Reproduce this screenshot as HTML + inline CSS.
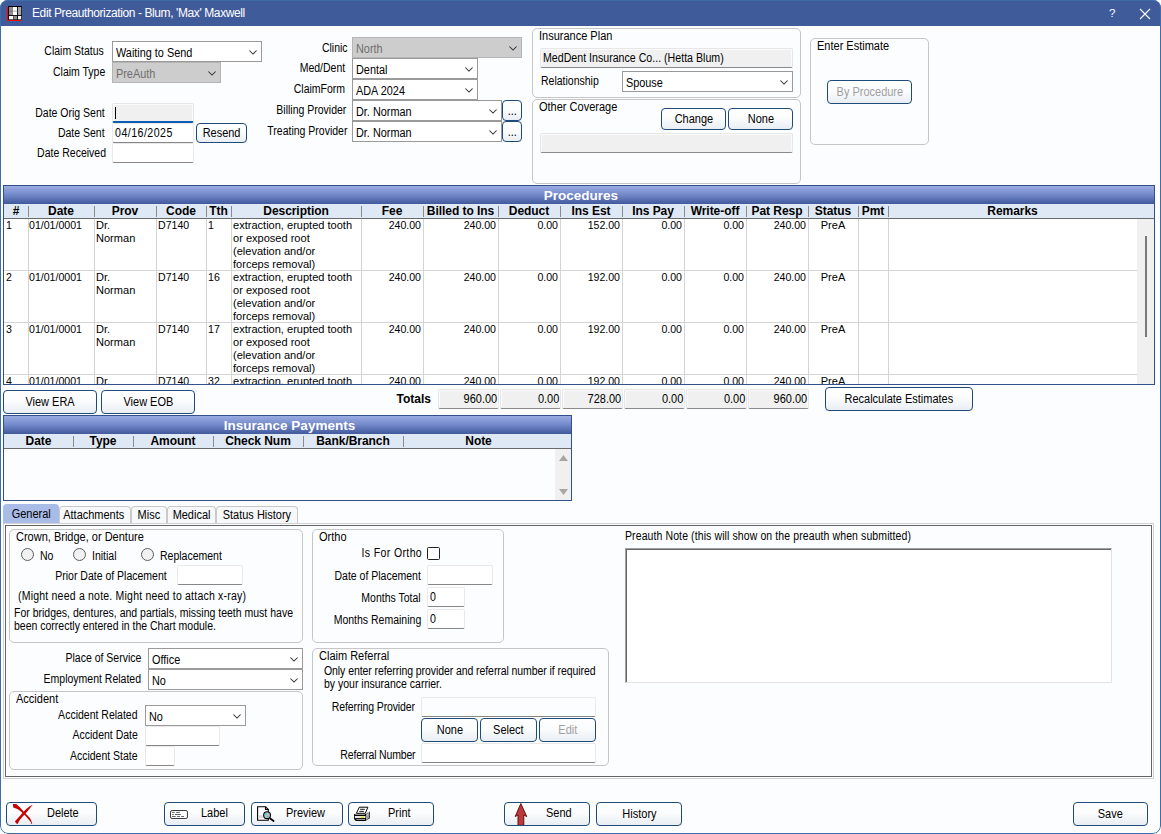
<!DOCTYPE html>
<html lang="en"><head><meta charset="utf-8"><title>Edit Preauthorization</title>
<style>
html,body{margin:0;padding:0;background:#fff;}
body{width:1161px;height:834px;overflow:hidden;position:relative;font-family:"Liberation Sans",sans-serif;font-size:12.5px;color:#000;}
#win{position:absolute;left:0;top:0;width:1161px;height:834px;border-radius:8px;background:#fcfdfe;overflow:hidden;}
#wb{position:absolute;left:0;top:0;width:1159px;height:832px;border:1px solid #3d6ea8;border-radius:8px;pointer-events:none;}
#tbar{position:absolute;left:0;top:0;width:1161px;height:25px;background:#405b9a;border-top:1px solid #4a7db8;}
#ttl{position:absolute;left:32px;top:6px;font-size:12px;color:#fff;white-space:nowrap;letter-spacing:-0.4px;}
.a{position:absolute;white-space:nowrap;}
.t{display:inline-block;transform:scaleX(.84);transform-origin:0 50%;white-space:nowrap;}
.r>.t{transform-origin:100% 50%;}
.bt>.t,.tab>.t{transform:scaleX(.878);transform-origin:50% 50%;}
.gt>.t{transform:scaleX(.88);}
.cb>.t{transform:scaleX(.869);}
.tb>.t{transform:scaleX(.85);}
.l{position:absolute;white-space:nowrap;line-height:15px;height:15px;}
.r{text-align:right;}
.cb{position:absolute;box-sizing:border-box;border:1px solid #9a9a9a;background:#fff;line-height:23px;padding-left:3px;white-space:nowrap;}
.cb.d{background:#cdcdcd;color:#6d6d6d;border-color:#b4b4b4;}
.cb svg{position:absolute;right:4px;top:8px;}
.tb{position:absolute;box-sizing:border-box;border:1px solid #e9e9e9;border-bottom:1px solid #868686;border-radius:2px;background:#fff;line-height:18px;padding-left:2px;white-space:nowrap;}
.tb.ro{background:#f0f0f0;border-color:#e6e6e6;border-bottom-color:#8a8a8a;box-shadow:inset 1px 1px 0 #fbfbfb,inset -1px 0 0 #fbfbfb;}
.bt{position:absolute;box-sizing:border-box;border:1px solid #1f4b7a;border-radius:4px;background:linear-gradient(#ffffff 0%,#fbfcfd 45%,#e9eef3 100%);text-align:center;white-space:nowrap;}
.bt.d{color:#a0a0a0;}
.gb{position:absolute;box-sizing:border-box;border:1px solid #c6c6c6;border-radius:5px;}
.gt{position:absolute;white-space:nowrap;line-height:15px;}
.grid{position:absolute;box-sizing:border-box;border:1px solid #34508a;background:#fff;overflow:hidden;}
.gtitle{position:absolute;left:0;top:0;right:0;height:18px;background:linear-gradient(#9aace1 0%,#7389ca 48%,#41599b 100%);color:#fff;font-weight:bold;font-size:13.5px;text-align:center;line-height:19px;padding-left:4px;}
.ghead{position:absolute;left:0;right:0;background:#dfe8f5;border-bottom:1px solid #6a6a6a;box-sizing:border-box;}
.hc{position:absolute;top:0;height:14px;line-height:14px;font-weight:bold;font-size:12px;text-align:center;white-space:nowrap;letter-spacing:-0.05px;}
.hs{position:absolute;top:2px;width:1px;height:11px;background:#8c8c8c;}
.vl{position:absolute;width:1px;background:#d4d4d4;}
.hl{position:absolute;height:1px;background:#d4d4d4;}
.c{position:absolute;line-height:13px;white-space:nowrap;font-size:11.5px;transform:scaleX(.96);transform-origin:0 0;}
.c.r{transform:scaleX(.92);transform-origin:100% 0;}
.c.n{transform:scaleX(.92);}
.c.m{transform-origin:50% 0;}
.tab{position:absolute;box-sizing:border-box;border:1px solid #c9c9c9;border-bottom:none;border-radius:4px 4px 0 0;background:#f7f8f9;text-align:center;line-height:17px;white-space:nowrap;}
.tab.s{background:#a9bce8;border-color:#a9bce8;}
.rad{position:absolute;box-sizing:border-box;width:13px;height:13px;border:1px solid #5e5e5e;border-radius:50%;background:#f1f1f1;}
</style></head><body>
<div id="win">
<div id="tbar"></div>
<svg class="a" style="left:0;top:0" width="30" height="26" viewBox="0 0 30 26"><rect x="7" y="7" width="1.5" height="14" fill="#f00"/><rect x="7" y="19.6" width="14.2" height="1.4" fill="#f00"/><rect x="8.2" y="6" width="13.7" height="13.7" fill="#000"/><rect x="9" y="7" width="3.9" height="8.1" fill="#8e8e8e"/><rect x="12.9" y="7" width="4.2" height="8.1" fill="#fff"/><rect x="12.9" y="10.5" width="4.2" height="1.3" fill="#c6c6c6"/><rect x="9" y="10.5" width="3.9" height="1.3" fill="#7a7a7a"/><rect x="18" y="7" width="3.2" height="8.1" fill="#a6a6a6"/><rect x="9" y="16" width="4" height="3.3" fill="#fff"/><rect x="13.4" y="16" width="3.7" height="3.3" fill="#8e8e8e"/><rect x="18" y="16" width="3.2" height="3.3" fill="#fff"/></svg>
<div id="ttl">Edit Preauthorization - Blum, 'Max' Maxwell</div>
<div class="a" style="left:1109px;top:7px;font-size:11.5px;color:#fff">?</div>
<svg class="a" style="left:1139px;top:8px" width="12" height="12" viewBox="0 0 12 12"><path d="M1 1L11 11M11 1L1 11" stroke="#fff" stroke-width="1.1" fill="none"/></svg>
<div class="l r" style="left:-96px;width:200px;top:44px;"><span class="t">Claim Status</span></div>
<div class="cb" style="left:112px;top:41px;width:150px;height:21px"><span class="t">Waiting to Send</span><svg width="8" height="5" viewBox="0 0 8 5"><path d="M0.4 0.5L4 4.1L7.6 0.5" stroke="#333" stroke-width="1.05" fill="none"/></svg></div>
<div class="l r" style="left:-95px;width:200px;top:65px;"><span class="t">Claim Type</span></div>
<div class="cb d" style="left:112px;top:62px;width:109px;height:21px"><span class="t">PreAuth</span><svg width="8" height="5" viewBox="0 0 8 5"><path d="M0.4 0.5L4 4.1L7.6 0.5" stroke="#333" stroke-width="1.05" fill="none"/></svg></div>
<div class="l r" style="left:-95px;width:200px;top:106px;"><span class="t">Date Orig Sent</span></div>
<div class="tb ro" style="left:112px;top:103px;width:82px;height:20px;border-bottom:2px solid #0a5fb4;"><span class="t"></span></div>
<div class="a" style="left:115px;top:107px;width:1px;height:12px;background:#000"></div>
<div class="l r" style="left:-95px;width:200px;top:126px;"><span class="t">Date Sent</span></div>
<div class="tb" style="left:112px;top:123px;width:82px;height:20px;letter-spacing:0.55px;"><span class="t">04/16/2025</span></div>
<div class="bt" style="left:196px;top:123px;width:51px;height:20px;line-height:18px"><span class="t">Resend</span></div>
<div class="l r" style="left:-94px;width:200px;top:146px;"><span class="t">Date Received</span></div>
<div class="tb" style="left:112px;top:143px;width:82px;height:20px;"><span class="t"></span></div>
<div class="l r" style="left:148px;width:200px;top:41px;"><span class="t">Clinic</span></div>
<div class="cb d" style="left:352px;top:37px;width:170px;height:21px"><span class="t">North</span><svg width="8" height="5" viewBox="0 0 8 5"><path d="M0.4 0.5L4 4.1L7.6 0.5" stroke="#333" stroke-width="1.05" fill="none"/></svg></div>
<div class="l r" style="left:145px;width:200px;top:61px;"><span class="t">Med/Dent</span></div>
<div class="cb" style="left:352px;top:58px;width:126px;height:21px"><span class="t">Dental</span><svg width="8" height="5" viewBox="0 0 8 5"><path d="M0.4 0.5L4 4.1L7.6 0.5" stroke="#333" stroke-width="1.05" fill="none"/></svg></div>
<div class="l r" style="left:145px;width:200px;top:82px;"><span class="t">ClaimForm</span></div>
<div class="cb" style="left:352px;top:79px;width:126px;height:21px"><span class="t">ADA 2024</span><svg width="8" height="5" viewBox="0 0 8 5"><path d="M0.4 0.5L4 4.1L7.6 0.5" stroke="#333" stroke-width="1.05" fill="none"/></svg></div>
<div class="l r" style="left:146px;width:200px;top:103px;"><span class="t">Billing Provider</span></div>
<div class="cb" style="left:352px;top:100px;width:150px;height:21px"><span class="t">Dr. Norman</span><svg width="8" height="5" viewBox="0 0 8 5"><path d="M0.4 0.5L4 4.1L7.6 0.5" stroke="#333" stroke-width="1.05" fill="none"/></svg></div>
<div class="bt" style="left:502px;top:100px;width:20px;height:21px;line-height:21px"><span class="t">...</span></div>
<div class="l r" style="left:147px;width:200px;top:124px;"><span class="t">Treating Provider</span></div>
<div class="cb" style="left:352px;top:121px;width:150px;height:21px"><span class="t">Dr. Norman</span><svg width="8" height="5" viewBox="0 0 8 5"><path d="M0.4 0.5L4 4.1L7.6 0.5" stroke="#333" stroke-width="1.05" fill="none"/></svg></div>
<div class="bt" style="left:502px;top:121px;width:20px;height:21px;line-height:21px"><span class="t">...</span></div>
<div class="gb" style="left:532px;top:28px;width:269px;height:70px"></div>
<div class="gt" style="left:539px;top:29px"><span class="t">Insurance Plan</span></div>
<div class="tb ro" style="left:540px;top:48px;width:253px;height:20px;"><span class="t">MedDent Insurance Co... (Hetta Blum)</span></div>
<div class="l" style="left:541px;top:74px;"><span class="t">Relationship</span></div>
<div class="cb" style="left:622px;top:71px;width:171px;height:21px"><span class="t">Spouse</span><svg width="8" height="5" viewBox="0 0 8 5"><path d="M0.4 0.5L4 4.1L7.6 0.5" stroke="#333" stroke-width="1.05" fill="none"/></svg></div>
<div class="gb" style="left:532px;top:99px;width:269px;height:85px"></div>
<div class="gt" style="left:539px;top:100px"><span class="t">Other Coverage</span></div>
<div class="bt" style="left:661px;top:108px;width:65px;height:22px;line-height:20px"><span class="t">Change</span></div>
<div class="bt" style="left:728px;top:108px;width:65px;height:22px;line-height:20px"><span class="t">None</span></div>
<div class="tb ro" style="left:540px;top:133px;width:253px;height:20px;"><span class="t"></span></div>
<div class="gb" style="left:810px;top:38px;width:119px;height:107px"></div>
<div class="gt" style="left:817px;top:39px"><span class="t">Enter Estimate</span></div>
<div class="bt d" style="left:827px;top:80px;width:85px;height:24px;line-height:22px"><span class="t">By Procedure</span></div>
<div class="grid" style="left:3px;top:185px;width:1152px;height:200px">
<div class="gtitle">Procedures</div>
<div class="ghead" style="top:18px;height:15px"></div>
<div class="hc" style="left:0px;width:24px;top:18px">#</div>
<div class="hc" style="left:24px;width:66px;top:18px">Date</div>
<div class="hs" style="left:24px;top:20px"></div>
<div class="hc" style="left:90px;width:62px;top:18px">Prov</div>
<div class="hs" style="left:90px;top:20px"></div>
<div class="hc" style="left:152px;width:50px;top:18px">Code</div>
<div class="hs" style="left:152px;top:20px"></div>
<div class="hc" style="left:202px;width:25px;top:18px">Tth</div>
<div class="hs" style="left:202px;top:20px"></div>
<div class="hc" style="left:227px;width:130px;top:18px">Description</div>
<div class="hs" style="left:227px;top:20px"></div>
<div class="hc" style="left:357px;width:62px;top:18px">Fee</div>
<div class="hs" style="left:357px;top:20px"></div>
<div class="hc" style="left:419px;width:75px;top:18px">Billed to Ins</div>
<div class="hs" style="left:419px;top:20px"></div>
<div class="hc" style="left:494px;width:62px;top:18px">Deduct</div>
<div class="hs" style="left:494px;top:20px"></div>
<div class="hc" style="left:556px;width:62px;top:18px">Ins Est</div>
<div class="hs" style="left:556px;top:20px"></div>
<div class="hc" style="left:618px;width:62px;top:18px">Ins Pay</div>
<div class="hs" style="left:618px;top:20px"></div>
<div class="hc" style="left:680px;width:62px;top:18px">Write-off</div>
<div class="hs" style="left:680px;top:20px"></div>
<div class="hc" style="left:742px;width:62px;top:18px">Pat Resp</div>
<div class="hs" style="left:742px;top:20px"></div>
<div class="hc" style="left:804px;width:50px;top:18px">Status</div>
<div class="hs" style="left:804px;top:20px"></div>
<div class="hc" style="left:854px;width:30px;top:18px">Pmt</div>
<div class="hs" style="left:854px;top:20px"></div>
<div class="hc" style="left:884px;width:249px;top:18px">Remarks</div>
<div class="hs" style="left:884px;top:20px"></div>
<div class="vl" style="left:24px;top:33px;height:170px"></div>
<div class="vl" style="left:90px;top:33px;height:170px"></div>
<div class="vl" style="left:152px;top:33px;height:170px"></div>
<div class="vl" style="left:202px;top:33px;height:170px"></div>
<div class="vl" style="left:227px;top:33px;height:170px"></div>
<div class="vl" style="left:357px;top:33px;height:170px"></div>
<div class="vl" style="left:419px;top:33px;height:170px"></div>
<div class="vl" style="left:494px;top:33px;height:170px"></div>
<div class="vl" style="left:556px;top:33px;height:170px"></div>
<div class="vl" style="left:618px;top:33px;height:170px"></div>
<div class="vl" style="left:680px;top:33px;height:170px"></div>
<div class="vl" style="left:742px;top:33px;height:170px"></div>
<div class="vl" style="left:804px;top:33px;height:170px"></div>
<div class="vl" style="left:854px;top:33px;height:170px"></div>
<div class="vl" style="left:884px;top:33px;height:170px"></div>
<div class="a" style="left:1133px;top:33px;width:17px;height:170px;background:#f0f0f0"></div>
<div class="a" style="left:1141px;top:50px;width:2px;height:101px;background:#7a7a7a"></div>
<div class="c n" style="left:2px;top:33px">1</div>
<div class="c n" style="left:25px;top:33px">01/01/0001</div>
<div class="c" style="left:92px;top:33px">Dr.<br>Norman</div>
<div class="c n" style="left:154px;top:33px">D7140</div>
<div class="c n" style="left:204px;top:33px">1</div>
<div class="c" style="left:229px;top:33px">extraction, erupted tooth<br>or exposed root<br>(elevation and/or<br>forceps removal)</div>
<div class="c r" style="left:317px;width:100px;top:33px">240.00</div>
<div class="c r" style="left:392px;width:100px;top:33px">240.00</div>
<div class="c r" style="left:454px;width:100px;top:33px">0.00</div>
<div class="c r" style="left:516px;width:100px;top:33px">152.00</div>
<div class="c r" style="left:578px;width:100px;top:33px">0.00</div>
<div class="c r" style="left:640px;width:100px;top:33px">0.00</div>
<div class="c r" style="left:702px;width:100px;top:33px">240.00</div>
<div class="c m" style="left:804px;width:50px;text-align:center;top:33px">PreA</div>
<div class="hl" style="left:0;top:84px;width:1133px"></div>
<div class="c n" style="left:2px;top:85px">2</div>
<div class="c n" style="left:25px;top:85px">01/01/0001</div>
<div class="c" style="left:92px;top:85px">Dr.<br>Norman</div>
<div class="c n" style="left:154px;top:85px">D7140</div>
<div class="c n" style="left:204px;top:85px">16</div>
<div class="c" style="left:229px;top:85px">extraction, erupted tooth<br>or exposed root<br>(elevation and/or<br>forceps removal)</div>
<div class="c r" style="left:317px;width:100px;top:85px">240.00</div>
<div class="c r" style="left:392px;width:100px;top:85px">240.00</div>
<div class="c r" style="left:454px;width:100px;top:85px">0.00</div>
<div class="c r" style="left:516px;width:100px;top:85px">192.00</div>
<div class="c r" style="left:578px;width:100px;top:85px">0.00</div>
<div class="c r" style="left:640px;width:100px;top:85px">0.00</div>
<div class="c r" style="left:702px;width:100px;top:85px">240.00</div>
<div class="c m" style="left:804px;width:50px;text-align:center;top:85px">PreA</div>
<div class="hl" style="left:0;top:136px;width:1133px"></div>
<div class="c n" style="left:2px;top:137px">3</div>
<div class="c n" style="left:25px;top:137px">01/01/0001</div>
<div class="c" style="left:92px;top:137px">Dr.<br>Norman</div>
<div class="c n" style="left:154px;top:137px">D7140</div>
<div class="c n" style="left:204px;top:137px">17</div>
<div class="c" style="left:229px;top:137px">extraction, erupted tooth<br>or exposed root<br>(elevation and/or<br>forceps removal)</div>
<div class="c r" style="left:317px;width:100px;top:137px">240.00</div>
<div class="c r" style="left:392px;width:100px;top:137px">240.00</div>
<div class="c r" style="left:454px;width:100px;top:137px">0.00</div>
<div class="c r" style="left:516px;width:100px;top:137px">192.00</div>
<div class="c r" style="left:578px;width:100px;top:137px">0.00</div>
<div class="c r" style="left:640px;width:100px;top:137px">0.00</div>
<div class="c r" style="left:702px;width:100px;top:137px">240.00</div>
<div class="c m" style="left:804px;width:50px;text-align:center;top:137px">PreA</div>
<div class="hl" style="left:0;top:188px;width:1133px"></div>
<div class="c n" style="left:2px;top:189px">4</div>
<div class="c n" style="left:25px;top:189px">01/01/0001</div>
<div class="c" style="left:92px;top:189px">Dr.<br>Norman</div>
<div class="c n" style="left:154px;top:189px">D7140</div>
<div class="c n" style="left:204px;top:189px">32</div>
<div class="c" style="left:229px;top:189px">extraction, erupted tooth<br>or exposed root<br>(elevation and/or<br>forceps removal)</div>
<div class="c r" style="left:317px;width:100px;top:189px">240.00</div>
<div class="c r" style="left:392px;width:100px;top:189px">240.00</div>
<div class="c r" style="left:454px;width:100px;top:189px">0.00</div>
<div class="c r" style="left:516px;width:100px;top:189px">192.00</div>
<div class="c r" style="left:578px;width:100px;top:189px">0.00</div>
<div class="c r" style="left:640px;width:100px;top:189px">0.00</div>
<div class="c r" style="left:702px;width:100px;top:189px">240.00</div>
<div class="c m" style="left:804px;width:50px;text-align:center;top:189px">PreA</div>
</div>
<div class="bt" style="left:3px;top:390px;width:94px;height:24px;line-height:22px"><span class="t">View ERA</span></div>
<div class="bt" style="left:101px;top:390px;width:94px;height:24px;line-height:22px"><span class="t">View EOB</span></div>
<div class="l r" style="left:331px;width:100px;top:392px;font-weight:bold;font-size:12px">Totals</div>
<div class="tb ro r" style="left:438px;top:389px;width:61px;height:20px;text-align:right;padding-right:1px;line-height:19px"><span class="t" style="transform:scaleX(.88)">960.00</span></div>
<div class="tb ro r" style="left:500px;top:389px;width:61px;height:20px;text-align:right;padding-right:1px;line-height:19px"><span class="t" style="transform:scaleX(.88)">0.00</span></div>
<div class="tb ro r" style="left:562px;top:389px;width:61px;height:20px;text-align:right;padding-right:1px;line-height:19px"><span class="t" style="transform:scaleX(.88)">728.00</span></div>
<div class="tb ro r" style="left:624px;top:389px;width:61px;height:20px;text-align:right;padding-right:1px;line-height:19px"><span class="t" style="transform:scaleX(.88)">0.00</span></div>
<div class="tb ro r" style="left:686px;top:389px;width:61px;height:20px;text-align:right;padding-right:1px;line-height:19px"><span class="t" style="transform:scaleX(.88)">0.00</span></div>
<div class="tb ro r" style="left:748px;top:389px;width:61px;height:20px;text-align:right;padding-right:1px;line-height:19px"><span class="t" style="transform:scaleX(.88)">960.00</span></div>
<div class="bt" style="left:825px;top:387px;width:148px;height:24px;line-height:22px"><span class="t">Recalculate Estimates</span></div>
<div class="grid" style="left:3px;top:415px;width:569px;height:86px;background:#fcfdfe">
<div class="gtitle">Insurance Payments</div>
<div class="ghead" style="top:18px;height:15px"></div>
<div class="hc" style="left:0px;width:69px;top:18px">Date</div>
<div class="hc" style="left:69px;width:60px;top:18px">Type</div>
<div class="hs" style="left:69px;top:20px"></div>
<div class="hc" style="left:129px;width:80px;top:18px">Amount</div>
<div class="hs" style="left:129px;top:20px"></div>
<div class="hc" style="left:209px;width:90px;top:18px">Check Num</div>
<div class="hs" style="left:209px;top:20px"></div>
<div class="hc" style="left:299px;width:100px;top:18px">Bank/Branch</div>
<div class="hs" style="left:299px;top:20px"></div>
<div class="hc" style="left:399px;width:151px;top:18px">Note</div>
<div class="hs" style="left:399px;top:20px"></div>
<div class="a" style="left:551px;top:33px;width:16px;height:51px;background:#f0f0f0"></div>
<svg class="a" style="left:555px;top:39px" width="9" height="6" viewBox="0 0 9 6"><path d="M0 6L4.5 0L9 6Z" fill="#a6a6a6"/></svg>
<svg class="a" style="left:555px;top:73px" width="9" height="6" viewBox="0 0 9 6"><path d="M0 0L4.5 6L9 0Z" fill="#a6a6a6"/></svg>
</div>
<div class="tab s" style="left:3px;top:504px;width:56px;height:19px;line-height:18px"><span class="t">General</span></div>
<div class="tab" style="left:59px;top:506px;width:72px;height:17px"><span class="t" style="position:relative;left:-1.5px">Attachments</span></div>
<div class="tab" style="left:131px;top:506px;width:36px;height:17px"><span class="t" style="">Misc</span></div>
<div class="tab" style="left:167px;top:506px;width:49px;height:17px"><span class="t" style="">Medical</span></div>
<div class="tab" style="left:216px;top:506px;width:82px;height:17px"><span class="t" style="">Status History</span></div>
<div class="a" style="left:3px;top:523px;width:1149px;height:254px;border:1px solid #d2d2d2;box-sizing:content-box"></div>
<div class="a" style="left:5px;top:525px;width:1145px;height:250px;border:1px solid #646464;box-sizing:content-box"></div>
<div class="gb" style="left:9px;top:529px;width:294px;height:114px"></div>
<div class="gt" style="left:16px;top:530px"><span class="t">Crown, Bridge, or Denture</span></div>
<div class="rad" style="left:21px;top:548px"></div>
<div class="rad" style="left:73px;top:548px"></div>
<div class="rad" style="left:141px;top:548px"></div>
<div class="l" style="left:40px;top:549px;"><span class="t">No</span></div>
<div class="l" style="left:92px;top:549px;"><span class="t">Initial</span></div>
<div class="l" style="left:160px;top:549px;"><span class="t">Replacement</span></div>
<div class="l r" style="left:-33px;width:200px;top:569px;"><span class="t">Prior Date of Placement</span></div>
<div class="tb" style="left:177px;top:565px;width:66px;height:20px;"><span class="t"></span></div>
<div class="l" style="left:18px;top:589px;letter-spacing:0.25px;"><span class="t">(Might need a note. Might need to attach x-ray)</span></div>
<div class="l" style="left:14px;top:606px;"><span class="t">For bridges, dentures, and partials, missing teeth must have</span></div>
<div class="l" style="left:14px;top:619px;"><span class="t">been correctly entered in the Chart module.</span></div>
<div class="gb" style="left:312px;top:529px;width:192px;height:114px"></div>
<div class="gt" style="left:319px;top:530px"><span class="t">Ortho</span></div>
<div class="l r" style="left:222px;width:200px;top:546px;letter-spacing:0.45px;"><span class="t">Is For Ortho</span></div>
<div class="a" style="left:427px;top:547px;width:11px;height:11px;border:1px solid #222;border-radius:1.5px;background:#fff"></div>
<div class="l r" style="left:221px;width:200px;top:569px;"><span class="t">Date of Placement</span></div>
<div class="tb" style="left:427px;top:565px;width:66px;height:20px;"><span class="t"></span></div>
<div class="l r" style="left:221px;width:200px;top:591px;"><span class="t">Months Total</span></div>
<div class="tb" style="left:427px;top:587px;width:38px;height:20px;"><span class="t">0</span></div>
<div class="l r" style="left:221px;width:200px;top:613px;"><span class="t">Months Remaining</span></div>
<div class="tb" style="left:427px;top:609px;width:38px;height:20px;"><span class="t">0</span></div>
<div class="l" style="left:625px;top:529px;letter-spacing:0.12px;"><span class="t">Preauth Note (this will show on the preauth when submitted)</span></div>
<div class="a" style="left:625px;top:548px;width:485px;height:133px;border:1px solid #e3e3e3;border-top-color:#a0a0a0;border-left-color:#a0a0a0;background:#fff;box-shadow:inset 1px 1px 0 #696969"></div>
<div class="l r" style="left:-59px;width:200px;top:651px;"><span class="t">Place of Service</span></div>
<div class="cb" style="left:148px;top:648px;width:155px;height:21px"><span class="t">Office</span><svg width="8" height="5" viewBox="0 0 8 5"><path d="M0.4 0.5L4 4.1L7.6 0.5" stroke="#333" stroke-width="1.05" fill="none"/></svg></div>
<div class="l r" style="left:-59px;width:200px;top:672px;"><span class="t">Employment Related</span></div>
<div class="cb" style="left:148px;top:669px;width:155px;height:21px"><span class="t">No</span><svg width="8" height="5" viewBox="0 0 8 5"><path d="M0.4 0.5L4 4.1L7.6 0.5" stroke="#333" stroke-width="1.05" fill="none"/></svg></div>
<div class="gb" style="left:9px;top:691px;width:294px;height:79px"></div>
<div class="gt" style="left:16px;top:692px"><span class="t">Accident</span></div>
<div class="l r" style="left:-62px;width:200px;top:708px;"><span class="t">Accident Related</span></div>
<div class="cb" style="left:145px;top:705px;width:101px;height:21px"><span class="t">No</span><svg width="8" height="5" viewBox="0 0 8 5"><path d="M0.4 0.5L4 4.1L7.6 0.5" stroke="#333" stroke-width="1.05" fill="none"/></svg></div>
<div class="l r" style="left:-62px;width:200px;top:728px;"><span class="t">Accident Date</span></div>
<div class="tb" style="left:145px;top:726px;width:75px;height:20px;"><span class="t"></span></div>
<div class="l r" style="left:-62px;width:200px;top:749px;"><span class="t">Accident State</span></div>
<div class="tb" style="left:145px;top:746px;width:30px;height:20px;"><span class="t"></span></div>
<div class="gb" style="left:312px;top:648px;width:297px;height:118px"></div>
<div class="gt" style="left:319px;top:649px"><span class="t">Claim Referral</span></div>
<div class="l" style="left:324px;top:664px;letter-spacing:-0.09px;"><span class="t">Only enter referring provider and referral number if required</span></div>
<div class="l" style="left:324px;top:677px;"><span class="t">by your insurance carrier.</span></div>
<div class="l r" style="left:215px;width:200px;top:700px;letter-spacing:-0.14px;"><span class="t">Referring Provider</span></div>
<div class="tb" style="left:421px;top:697px;width:175px;height:20px;background:#fcfdfe"><span class="t"></span></div>
<div class="bt" style="left:421px;top:718px;width:57px;height:24px;line-height:22px"><span class="t">None</span></div>
<div class="bt" style="left:480px;top:718px;width:57px;height:24px;line-height:22px"><span class="t">Select</span></div>
<div class="bt d" style="left:539px;top:718px;width:57px;height:24px;line-height:22px"><span class="t">Edit</span></div>
<div class="l r" style="left:215px;width:200px;top:748px;letter-spacing:-0.2px;"><span class="t">Referral Number</span></div>
<div class="tb" style="left:421px;top:743px;width:175px;height:20px;"><span class="t"></span></div>
<div class="bt" style="left:6px;top:802px;width:91px;height:24px"></div>
<svg class="a" style="left:6px;top:800px" width="30" height="28" viewBox="0 0 30 28"><path d="M7 4.1L10.2 4C12.5 5.8 15 8.6 17.9 11.7C20.5 14.4 23 16.8 23.9 18C24.9 19.5 25.7 21.8 26.2 23.9L25.5 24.1C25.2 23 24.9 22.4 24.5 21.8C23.3 20.2 22 18.8 20.7 17.3C18.8 15.2 17 13.3 15.2 11.8C13.8 10.6 12.6 9.6 11.4 9C10 8.3 8.6 7.8 7.2 7.4Z" fill="#c80000"/><path d="M26.9 4.8C25.8 5.2 24.6 5.8 23.4 6.6C21.4 8 19.6 9.6 17.9 11.4C16.7 12.6 15.6 13.9 14.5 15.2C12.5 17.4 10.6 19.5 8.8 21.5L11 23.9L11.8 23.8C12.3 22.4 13 21.2 13.8 20C15.5 17.8 17.4 15.8 19.3 13.8C20.9 11.8 22.5 9.8 24.1 7.9C25 6.8 26 5.8 26.9 4.8Z" fill="#c80000"/></svg>
<div class="l" style="left:47px;top:806px"><span class="t" style="transform:scaleX(.878)">Delete</span></div>
<div class="bt" style="left:164px;top:802px;width:81px;height:24px"></div>
<svg class="a" style="left:164px;top:800px" width="30" height="28" viewBox="0 0 30 28"><rect x="6.5" y="10.5" width="17" height="8" rx="1.6" fill="#fff" stroke="#3c3c3c" stroke-width="1"/><path d="M7.9 12.4h2.8M12.1 12.4h3.8M8.1 14.5h1.7M11 14.5h5.9M7.9 16.5h3.8M13.1 16.5h2.8M17.2 16.5h2.8" stroke="#3c3c3c" stroke-width="0.8"/></svg>
<div class="l" style="left:201px;top:806px"><span class="t" style="transform:scaleX(.878)">Label</span></div>
<div class="bt" style="left:251px;top:802px;width:92px;height:24px"></div>
<svg class="a" style="left:250px;top:800px" width="30" height="28" viewBox="0 0 30 28"><path d="M7.6 6.7H15.5L18.3 9.5V20.3H7.6Z" fill="#fff" stroke="#000" stroke-width="1.1"/><path d="M15.5 6.7V9.5H18.3" fill="none" stroke="#000" stroke-width="1.1"/><rect x="8.8" y="15.2" width="4" height="3" fill="#dcdcdc"/><circle cx="17.05" cy="15.2" r="3.4" fill="#bdbdbd" stroke="#000" stroke-width="1.1"/><circle cx="15.8" cy="14" r="1" fill="#00e8f0"/><circle cx="17.6" cy="16.5" r="0.7" fill="#00e8f0"/><path d="M20.2 18.5L23.6 21" stroke="#000" stroke-width="1.7" stroke-linecap="round"/></svg>
<div class="l" style="left:286px;top:806px"><span class="t" style="transform:scaleX(.878)">Preview</span></div>
<div class="bt" style="left:348px;top:802px;width:86px;height:24px"></div>
<svg class="a" style="left:346px;top:800px" width="30" height="28" viewBox="0 0 30 28"><path d="M8.1 14L19.3 14L23.8 11.6V18.3L19.3 21H9.8L8.1 19.3Z" fill="#000"/><path d="M20 14.3L23.2 12.5V18L20 20Z" fill="#9a9a9a"/><path d="M20.2 13.4l.7-.6.7.6-.7.6zM21.9 12.4l.7-.6.7.6-.7.6zM21 14.9l.7-.6.7.6-.7.6zM20.3 19l.7-.6.7.6-.7.6z" fill="#fff"/><path d="M13.3 7.2H21.9L19.3 13.3H10.4Z" fill="#fff" stroke="#000" stroke-width="1"/><path d="M14.1 9.3h4.7M13.3 11.4h4.6" stroke="#000" stroke-width="0.9"/><rect x="9.3" y="14.3" width="9.6" height="0.6" fill="#fff"/><rect x="8.9" y="16" width="10.6" height="2.1" fill="#e6e6ee"/><rect x="14.8" y="16.6" width="3.3" height="1.3" fill="#e6e000"/><rect x="10.3" y="19.3" width="8.7" height="0.6" fill="#fff"/></svg>
<div class="l" style="left:388px;top:806px"><span class="t" style="transform:scaleX(.878)">Print</span></div>
<div class="bt" style="left:504px;top:802px;width:86px;height:24px"></div>
<svg class="a" style="left:502px;top:800px" width="30" height="25.3" viewBox="0 0 30 25.3"><path d="M18.8 3.6L24.8 16.6L21.8 15V25.3H16V15L13.2 16.6Z" fill="#bc3a3c" stroke="#5a0808" stroke-width="0.9" stroke-linejoin="miter"/></svg>
<div class="l" style="left:546px;top:806px"><span class="t" style="transform:scaleX(.878)">Send</span></div>
<div class="bt" style="left:596px;top:802px;width:86px;height:24px;line-height:22px"><span class="t">History</span></div>
<div class="bt" style="left:1073px;top:802px;width:75px;height:24px;line-height:22px"><span class="t">Save</span></div>
<div id="wb"></div>
</div></body></html>
